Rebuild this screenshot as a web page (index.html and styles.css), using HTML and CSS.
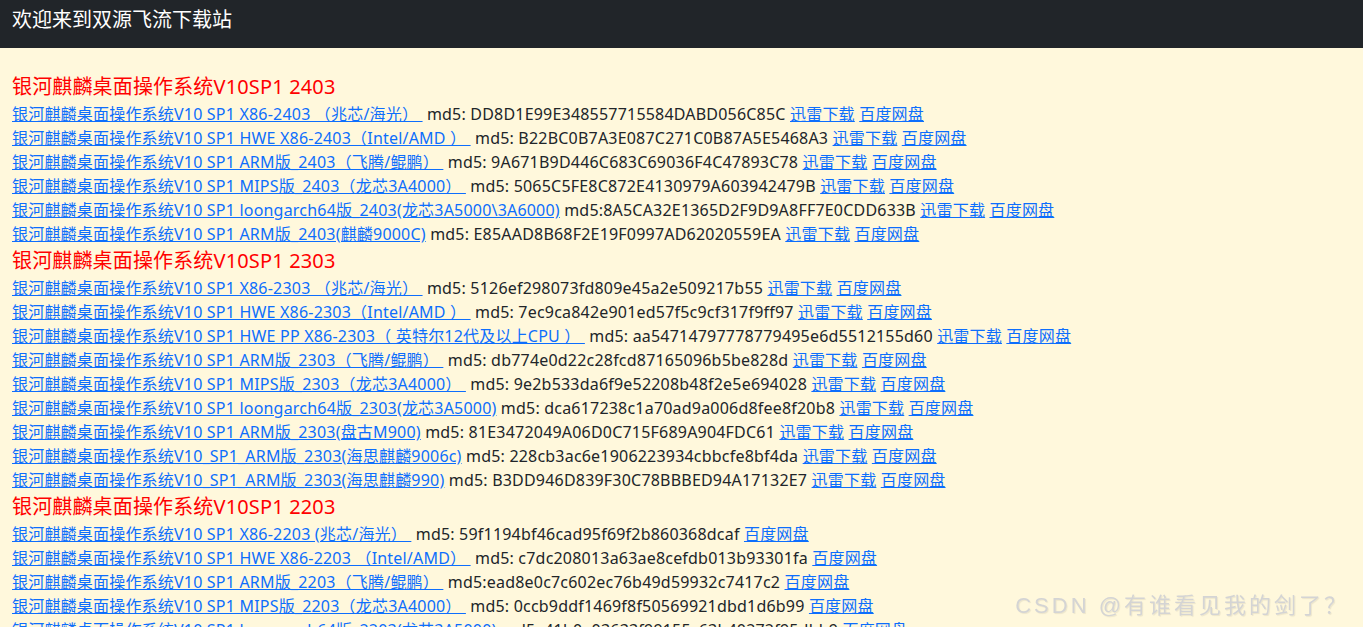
FILE: index.html
```html
<!DOCTYPE html>
<html lang="zh-CN">
<head>
    <meta charset="UTF-8">
    <meta name="viewport" content="width=device-width, initial-scale=1.0">
    <title>双源飞流下载站</title>
    <link rel="stylesheet" href="styles.css">
</head>
<body>
    <div class="top-bar">欢迎来到双源飞流下载站</div>
    <div class="download-list">
        <div class="group-title">银河麒麟桌面操作系统V10SP1 2403</div>
        <div class="item"><a href="#">银河麒麟桌面操作系统V10 SP1 X86-2403 （兆芯/海光）&nbsp;</a> md5: DD8D1E99E348557715584DABD056C85C <a href="#">迅雷下载</a> <a href="#">百度网盘</a></div>
        <div class="item"><a href="#">银河麒麟桌面操作系统V10 SP1 HWE X86-2403（Intel/AMD ）&nbsp;</a> md5: B22BC0B7A3E087C271C0B87A5E5468A3 <a href="#">迅雷下载</a> <a href="#">百度网盘</a></div>
        <div class="item"><a href="#">银河麒麟桌面操作系统V10 SP1 ARM版_2403（飞腾/鲲鹏）&nbsp;</a> md5: 9A671B9D446C683C69036F4C47893C78 <a href="#">迅雷下载</a> <a href="#">百度网盘</a></div>
        <div class="item"><a href="#">银河麒麟桌面操作系统V10 SP1 MIPS版_2403（龙芯3A4000）&nbsp;</a> md5: 5065C5FE8C872E4130979A603942479B <a href="#">迅雷下载</a> <a href="#">百度网盘</a></div>
        <div class="item"><a href="#">银河麒麟桌面操作系统V10 SP1 loongarch64版_2403(龙芯3A5000\3A6000)</a> md5:8A5CA32E1365D2F9D9A8FF7E0CDD633B <a href="#">迅雷下载</a> <a href="#">百度网盘</a></div>
        <div class="item"><a href="#">银河麒麟桌面操作系统V10 SP1 ARM版_2403(麒麟9000C)</a> md5: E85AAD8B68F2E19F0997AD62020559EA <a href="#">迅雷下载</a> <a href="#">百度网盘</a></div>

        <div class="group-title">银河麒麟桌面操作系统V10SP1 2303</div>
        <div class="item"><a href="#">银河麒麟桌面操作系统V10 SP1 X86-2303 （兆芯/海光）&nbsp;</a> md5: 5126ef298073fd809e45a2e509217b55 <a href="#">迅雷下载</a> <a href="#">百度网盘</a></div>
        <div class="item"><a href="#">银河麒麟桌面操作系统V10 SP1 HWE X86-2303（Intel/AMD ）&nbsp;</a> md5: 7ec9ca842e901ed57f5c9cf317f9ff97 <a href="#">迅雷下载</a> <a href="#">百度网盘</a></div>
        <div class="item"><a href="#">银河麒麟桌面操作系统V10 SP1 HWE PP X86-2303（ 英特尔12代及以上CPU ）&nbsp;</a> md5: aa54714797778779495e6d5512155d60 <a href="#">迅雷下载</a> <a href="#">百度网盘</a></div>
        <div class="item"><a href="#">银河麒麟桌面操作系统V10 SP1 ARM版_2303（飞腾/鲲鹏）&nbsp;</a> md5: db774e0d22c28fcd87165096b5be828d <a href="#">迅雷下载</a> <a href="#">百度网盘</a></div>
        <div class="item"><a href="#">银河麒麟桌面操作系统V10 SP1 MIPS版_2303（龙芯3A4000）&nbsp;</a> md5: 9e2b533da6f9e52208b48f2e5e694028 <a href="#">迅雷下载</a> <a href="#">百度网盘</a></div>
        <div class="item"><a href="#">银河麒麟桌面操作系统V10 SP1 loongarch64版_2303(龙芯3A5000)</a> md5: dca617238c1a70ad9a006d8fee8f20b8 <a href="#">迅雷下载</a> <a href="#">百度网盘</a></div>
        <div class="item"><a href="#">银河麒麟桌面操作系统V10 SP1 ARM版_2303(盘古M900)</a> md5: 81E3472049A06D0C715F689A904FDC61 <a href="#">迅雷下载</a> <a href="#">百度网盘</a></div>
        <div class="item"><a href="#">银河麒麟桌面操作系统V10_SP1_ARM版_2303(海思麒麟9006c)</a> md5: 228cb3ac6e1906223934cbbcfe8bf4da <a href="#">迅雷下载</a> <a href="#">百度网盘</a></div>
        <div class="item"><a href="#">银河麒麟桌面操作系统V10_SP1_ARM版_2303(海思麒麟990)</a> md5: B3DD946D839F30C78BBBED94A17132E7 <a href="#">迅雷下载</a> <a href="#">百度网盘</a></div>

        <div class="group-title">银河麒麟桌面操作系统V10SP1 2203</div>
        <div class="item"><a href="#">银河麒麟桌面操作系统V10 SP1 X86-2203 (兆芯/海光）&nbsp;</a> md5: 59f1194bf46cad95f69f2b860368dcaf <a href="#">百度网盘</a></div>
        <div class="item"><a href="#">银河麒麟桌面操作系统V10 SP1 HWE X86-2203 （Intel/AMD）&nbsp;</a> md5: c7dc208013a63ae8cefdb013b93301fa <a href="#">百度网盘</a></div>
        <div class="item"><a href="#">银河麒麟桌面操作系统V10 SP1 ARM版_2203（飞腾/鲲鹏）&nbsp;</a> md5:ead8e0c7c602ec76b49d59932c7417c2 <a href="#">百度网盘</a></div>
        <div class="item"><a href="#">银河麒麟桌面操作系统V10 SP1 MIPS版_2203（龙芯3A4000）&nbsp;</a> md5: 0ccb9ddf1469f8f50569921dbd1d6b99 <a href="#">百度网盘</a></div>
        <div class="item"><a href="#">银河麒麟桌面操作系统V10 SP1 loongarch64版_2203(龙芯3A5000)</a> md5: 41b0e03633f99155c63b40272f95dbb9 <a href="#">百度网盘</a></div>
    </div>
    <div class="watermark">CSDN @有谁看见我的剑了？</div>
</body>
</html>
```

FILE: styles.css
```css
* {
    margin: 0;
    padding: 0;
    box-sizing: border-box;
}
body {
    background: #fff8dc;
    color: #212529;
    font-family: "Noto Sans", "Noto Sans CJK SC", sans-serif;
    font-size: 16px;
}
.top-bar {
    height: 48px;
    padding: 8px 12px;
    background: #212529;
    color: #fff;
    font-size: 20px;
    line-height: 24px;
}
.download-list {
    padding: 24px 12px 40px;
}
.group-title {
    color: #ff0000;
    font-size: 20px;
    line-height: 30px;
    letter-spacing: 0.15px;
}
.item {
    line-height: 24px;
    white-space: nowrap;
    letter-spacing: 0.2px;
}
.item a {
    color: #0d6efd;
    text-decoration: underline;
}
.watermark {
    position: fixed;
    right: 14px;
    bottom: 8px;
    font-family: "Liberation Sans", "Noto Sans CJK SC", sans-serif;
    font-size: 22px;
    letter-spacing: 3px;
    color: #d4d4d4;
    text-shadow: 1px 1px 1px rgba(0, 0, 0, 0.08);
}
```
